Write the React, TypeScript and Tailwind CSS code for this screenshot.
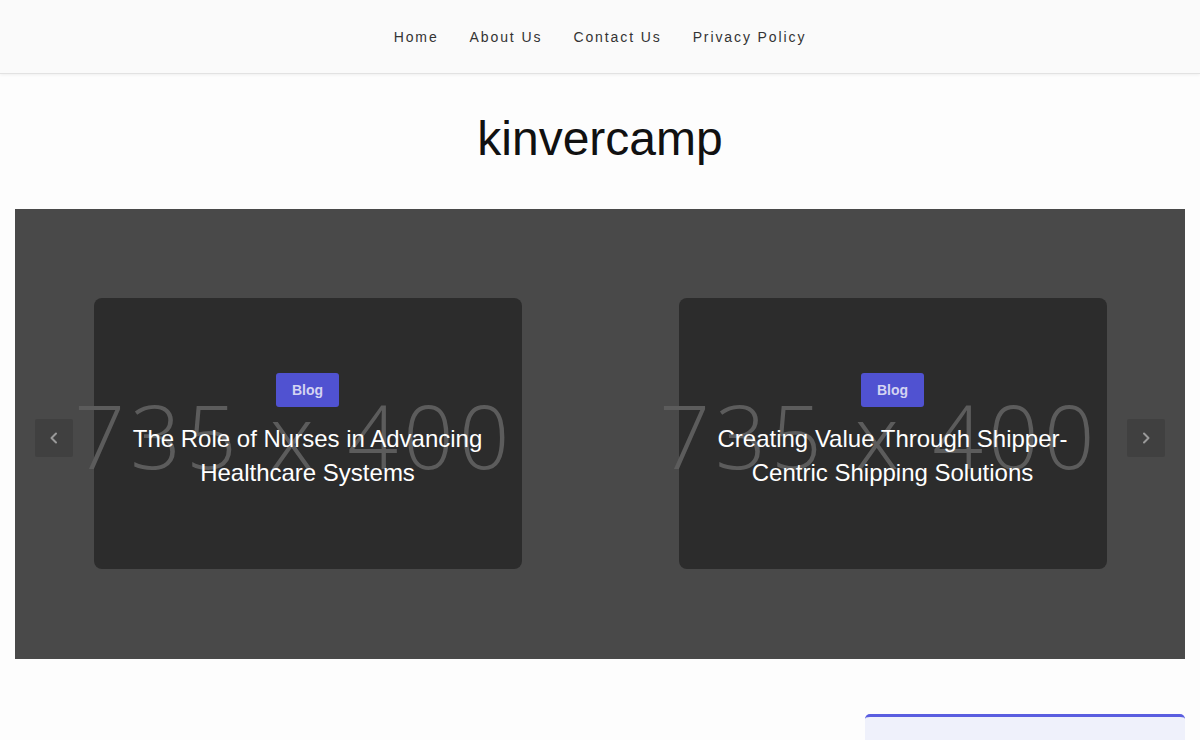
import React from 'react';

const posts = [
  { tag: 'Blog', title: 'The Role of Nurses in Advancing Healthcare Systems' },
  { tag: 'Blog', title: 'Creating Value Through Shipper-Centric Shipping Solutions' },
];

const links = ['Home', 'About Us', 'Contact Us', 'Privacy Policy'];

const Chevron: React.FC<{ dir: 'left' | 'right' }> = ({ dir }) => (
  <svg width="16" height="16" viewBox="0 0 16 16" fill="none">
    <path
      d={dir === 'left' ? 'M10 3.5 5.5 8l4.5 4.5' : 'M6 3.5 10.5 8 6 12.5'}
      stroke="#9a9a9a"
      strokeWidth="2"
      strokeLinecap="round"
      strokeLinejoin="round"
    />
  </svg>
);

const App: React.FC = () => {
  return (
    <div className="min-h-screen bg-[#fdfdfd] font-['Liberation_Sans',Arial,sans-serif]">
      {/* Top nav */}
      <nav className="h-[74px] bg-[#fafafa] border-b border-[#e2e2e2] shadow-[0_1px_3px_rgba(0,0,0,0.06)] flex items-center justify-center">
        <ul className="flex gap-[31px] pt-[1px]">
          {links.map((l) => (
            <li key={l} className="text-[14px] tracking-[1.9px] text-[#333]">
              {l}
            </li>
          ))}
        </ul>
      </nav>

      {/* Site title */}
      <h1 className="text-center text-[48px] leading-none text-[#111] pt-[41px] pb-[46px]">kinvercamp</h1>

      {/* Slider */}
      <section className="mx-[15px] h-[450px] bg-[#494949] flex items-center justify-between px-[20px]">
        <button className="mt-[8px] w-[38px] h-[38px] bg-[#404040] rounded-[2px] flex items-center justify-center">
          <Chevron dir="left" />
        </button>
        <div className="flex gap-[157px] -mt-[1px]">
          {posts.map((p) => (
            <article
              key={p.title}
              className="relative w-[428px] h-[271px] bg-[#2c2c2c] rounded-[8px] flex flex-col items-center justify-center"
            >
              <span className="absolute left-[-40px] right-[-14px] top-[92px] text-center text-[89px] tracking-[5px] leading-none font-light text-[#5c5c5c] font-['Open_Sans',sans-serif] whitespace-nowrap select-none">
                735 x 400
              </span>
              <div className="relative flex flex-col items-center -mt-[4px]">
                <span className="bg-[#5052d1] text-[#d4d4f2] text-[14px] font-bold px-[16px] h-[34px] flex items-center rounded-[3px]">
                  {p.tag}
                </span>
                <h2 className="mt-[15px] px-[36px] text-center text-white text-[24px] leading-[34px]">
                  {p.title}
                </h2>
              </div>
            </article>
          ))}
        </div>
        <button className="mt-[8px] w-[38px] h-[38px] bg-[#404040] rounded-[2px] flex items-center justify-center">
          <Chevron dir="right" />
        </button>
      </section>

      {/* Below content */}
      <div className="flex justify-end px-[15px] pt-[55px]">
        <div className="w-[320px] h-[40px] bg-[#eff1fb] border-t-[3px] border-[#5a5ee0] rounded-t-[5px]" />
      </div>
    </div>
  );
};

export default App;
